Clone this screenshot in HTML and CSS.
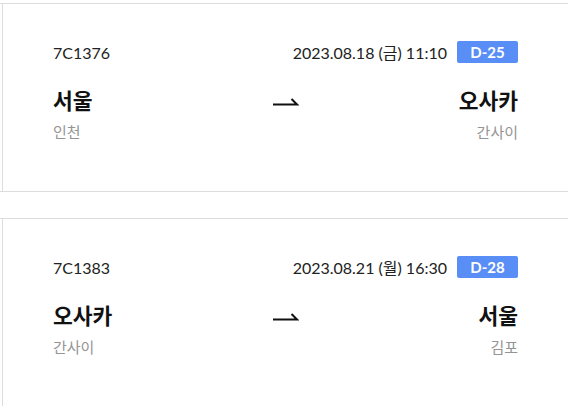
FILE: index.html
```html
<!DOCTYPE html>
<html lang="ko">
<head>
<meta charset="utf-8">
<link rel="stylesheet" href="styles.css">
</head>
<body>
<div class="list">
  <div class="ticket">
    <div class="ticket-inner">
      <div class="row-top">
        <span class="flight">7C1376</span>
        <div class="when">
          <span class="date">2023.08.18 (금) 11:10</span>
          <span class="badge">D-25</span>
        </div>
      </div>
      <div class="row-route">
        <div class="place">
          <div class="city">서울</div>
          <div class="airport">인천</div>
        </div>
        <svg class="arrow" width="26" height="10" viewBox="0 0 26 10"><path d="M0 8.5H24L18.5 3" fill="none" stroke="#111" stroke-width="2"/></svg>
        <div class="place right">
          <div class="city">오사카</div>
          <div class="airport">간사이</div>
        </div>
      </div>
    </div>
  </div>
  <div class="ticket">
    <div class="ticket-inner">
      <div class="row-top">
        <span class="flight">7C1383</span>
        <div class="when">
          <span class="date">2023.08.21 (월) 16:30</span>
          <span class="badge">D-28</span>
        </div>
      </div>
      <div class="row-route">
        <div class="place">
          <div class="city">오사카</div>
          <div class="airport">간사이</div>
        </div>
        <svg class="arrow" width="26" height="10" viewBox="0 0 26 10"><path d="M0 8.5H24L18.5 3" fill="none" stroke="#111" stroke-width="2"/></svg>
        <div class="place right">
          <div class="city">서울</div>
          <div class="airport">김포</div>
        </div>
      </div>
    </div>
  </div>
</div>
</body>
</html>
```
FILE: styles.css
```css
html, body {
  margin: 0;
  padding: 0;
  background: #fff;
}
body {
  font-family: Lato, "Noto Sans CJK KR", sans-serif;
  color: #222;
  width: 568px;
  overflow: hidden;
}
.list {
  padding-top: 3px;
  display: flex;
  flex-direction: column;
  gap: 26px;
}
.ticket {
  border-top: 1px solid #dddddd;
  border-bottom: 1px solid #dddddd;
}
.ticket-inner {
  margin-left: 2px;
  border-left: 1px solid #dddddd;
  padding: 37px 50px 49px 50px;
  display: flex;
  flex-direction: column;
  gap: 23px;
}
.row-top {
  display: flex;
  align-items: center;
  justify-content: space-between;
  height: 22px;
}
.flight {
  font-size: 16px;
}
.when {
  display: flex;
  align-items: center;
  gap: 10px;
}
.date {
  font-size: 16px;
}
.badge {
  background: #5a8ef7;
  color: #fff;
  font-weight: 700;
  font-size: 15px;
  width: 61px;
  height: 22px;
  line-height: 22px;
  text-align: center;
  border-radius: 2px;
}
.row-route {
  display: grid;
  grid-template-columns: 1fr auto 1fr;
  align-items: start;
}
.place {
  display: flex;
  flex-direction: column;
  gap: 8px;
}
.place.right {
  align-items: flex-end;
}
.city {
  font-family: "Noto Sans CJK KR", sans-serif;
  font-size: 21.5px;
  font-weight: 700;
  color: #111;
  line-height: 28px;
}
.airport {
  font-family: "Noto Sans CJK KR", sans-serif;
  font-size: 15px;
  color: #949494;
  line-height: 20px;
}
.arrow {
  margin-top: 10px;
}
```
